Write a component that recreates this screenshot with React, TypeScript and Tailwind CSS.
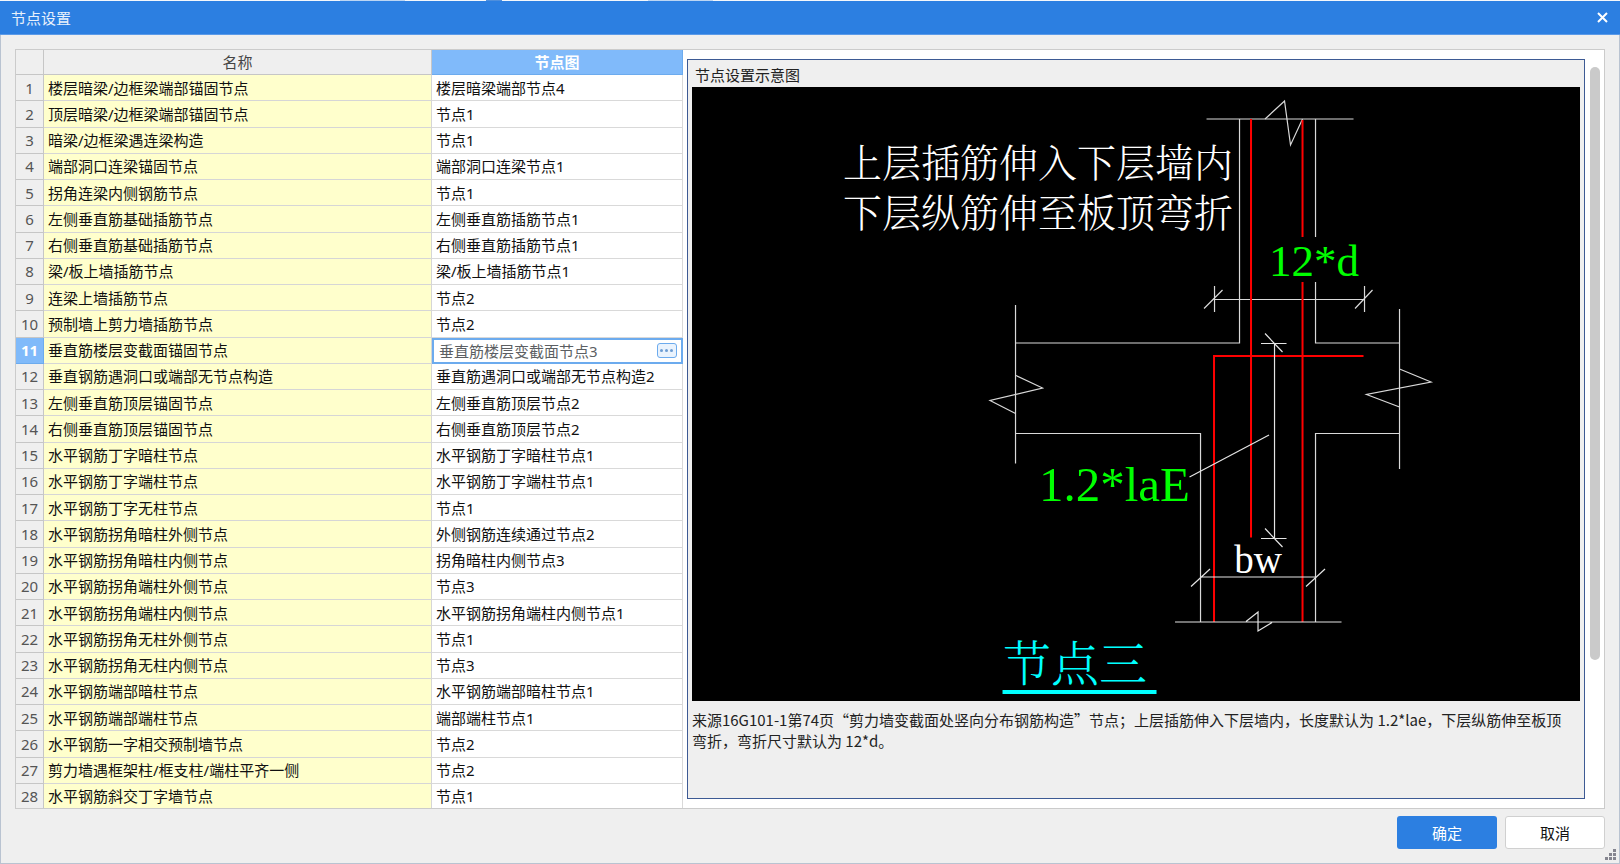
import React from "react";

const SANS = 'font-["Noto_Sans","Noto_Sans_CJK_SC",sans-serif]';

type Row = { name: string; node: string };

const rows: Row[] = [
  { name: "楼层暗梁/边框梁端部锚固节点", node: "楼层暗梁端部节点4" },
  { name: "顶层暗梁/边框梁端部锚固节点", node: "节点1" },
  { name: "暗梁/边框梁遇连梁构造", node: "节点1" },
  { name: "端部洞口连梁锚固节点", node: "端部洞口连梁节点1" },
  { name: "拐角连梁内侧钢筋节点", node: "节点1" },
  { name: "左侧垂直筋基础插筋节点", node: "左侧垂直筋插筋节点1" },
  { name: "右侧垂直筋基础插筋节点", node: "右侧垂直筋插筋节点1" },
  { name: "梁/板上墙插筋节点", node: "梁/板上墙插筋节点1" },
  { name: "连梁上墙插筋节点", node: "节点2" },
  { name: "预制墙上剪力墙插筋节点", node: "节点2" },
  { name: "垂直筋楼层变截面锚固节点", node: "垂直筋楼层变截面节点3" },
  { name: "垂直钢筋遇洞口或端部无节点构造", node: "垂直筋遇洞口或端部无节点构造2" },
  { name: "左侧垂直筋顶层锚固节点", node: "左侧垂直筋顶层节点2" },
  { name: "右侧垂直筋顶层锚固节点", node: "右侧垂直筋顶层节点2" },
  { name: "水平钢筋丁字暗柱节点", node: "水平钢筋丁字暗柱节点1" },
  { name: "水平钢筋丁字端柱节点", node: "水平钢筋丁字端柱节点1" },
  { name: "水平钢筋丁字无柱节点", node: "节点1" },
  { name: "水平钢筋拐角暗柱外侧节点", node: "外侧钢筋连续通过节点2" },
  { name: "水平钢筋拐角暗柱内侧节点", node: "拐角暗柱内侧节点3" },
  { name: "水平钢筋拐角端柱外侧节点", node: "节点3" },
  { name: "水平钢筋拐角端柱内侧节点", node: "水平钢筋拐角端柱内侧节点1" },
  { name: "水平钢筋拐角无柱外侧节点", node: "节点1" },
  { name: "水平钢筋拐角无柱内侧节点", node: "节点3" },
  { name: "水平钢筋端部暗柱节点", node: "水平钢筋端部暗柱节点1" },
  { name: "水平钢筋端部端柱节点", node: "端部端柱节点1" },
  { name: "水平钢筋一字相交预制墙节点", node: "节点2" },
  { name: "剪力墙遇框架柱/框支柱/端柱平齐一侧", node: "节点2" },
  { name: "水平钢筋斜交丁字墙节点", node: "节点1" },
];

const SELECTED = 10;

function TitleBar() {
  return (
    <header className="flex h-[34px] shrink-0 items-center justify-between border-b border-[#5b9ae8] bg-[#2c7fe1] pl-[11px] pr-3">
      <h1 className="text-[15px] leading-5 text-[#e8f1fc]">节点设置</h1>
      <button type="button" aria-label="关闭" className="flex size-[11px] items-center justify-center">
        <svg viewBox="0 0 11 11" className="size-[11px]" stroke="#fff" strokeWidth="2" fill="none">
          <path d="M1 1 L10 10 M10 1 L1 10" />
        </svg>
      </button>
    </header>
  );
}

function NodeEditor({ value }: { value: string }) {
  return (
    <div className="flex h-full items-center border-2 border-[#6cabee] bg-white pl-[5px] pr-1">
      <input
        aria-label="节点图"
        defaultValue={value}
        className="h-5 min-w-0 flex-1 bg-transparent p-0 text-[15px] leading-5 text-[#5c5f63] outline-none"
      />
      <button
        type="button"
        aria-label="选择节点图"
        className="flex h-[15px] w-5 items-center justify-center gap-[2px] rounded-[3px] border border-[#6cabee] bg-[#eaf3fd]"
      >
        <span className="size-[3px] rounded-full bg-[#6d9dd3]" />
        <span className="size-[3px] rounded-full bg-[#6d9dd3]" />
        <span className="size-[3px] rounded-full bg-[#6d9dd3]" />
      </button>
    </div>
  );
}

function NodeTable() {
  return (
    <div className="w-[42%] shrink-0 overflow-hidden">
      <table className="h-[calc(100%+2px)] w-full table-fixed border-separate border-spacing-0 text-left text-[15px] leading-5">
        <colgroup>
          <col className="w-7" />
          <col />
          <col className="w-[251px]" />
        </colgroup>
        <thead>
          <tr className="h-[25px]">
            <td className="border-b border-r border-[#c6c6c6] bg-[#efefef] p-0" />
            <th scope="col" className="border-b border-r border-[#c6c6c6] bg-[#efefef] p-0 text-center font-normal text-[#444]">
              名称
            </th>
            <th scope="col" className="border-b border-r border-[#6cabee] bg-[#80bafa] p-0 text-center font-bold text-white">
              节点图
            </th>
          </tr>
        </thead>
        <tbody>
          {rows.map((row, i) => (
            <tr key={i} className="h-[26px]">
              <th
                scope="row"
                className={
                  i === SELECTED
                    ? "border-b border-r border-[#6cabee] bg-[#80bafa] p-0 text-center font-bold text-white"
                    : "border-b border-r border-[#c6c6c6] bg-[#efefef] p-0 text-center font-normal text-[#555]"
                }
              >
                {i + 1}
              </th>
              <td className="border-b border-r border-[#d6d6d6] bg-[#ffffcc] py-0 pl-1 pr-0 text-[#111]">{row.name}</td>
              {i === SELECTED ? (
                <td className="h-[26px] p-0">
                  <NodeEditor value={row.node} />
                </td>
              ) : (
                <td className="border-b border-r border-[#d9d9d9] bg-white py-0 pl-1 pr-0 text-[#111]">{row.node}</td>
              )}
            </tr>
          ))}
        </tbody>
      </table>
    </div>
  );
}

function Diagram() {
  return (
    <svg viewBox="692 87 888 614" className="min-h-0 w-full flex-1 bg-black" role="img" aria-label="节点三">
      <g fill="none" stroke="#d9d9d9" strokeWidth="1.2">
        <path d="M1206.5 119H1353.5 M1239.5 119V343H1015.5 M1315.5 119V237 M1315.5 282V343H1399.5" />
        <path d="M1265 119L1284.5 101L1290.5 145L1302.5 119" />
        <path d="M1214.5 299.5H1364.5 M1214.5 286V312 M1364.5 286V312 M1204 308.5L1222.5 290 M1355 308.5L1372.5 290" />
        <path d="M1015.5 305V463.5 M1399.5 309V469" />
        <path d="M1015.5 433.5H1200.5V622 M1399.5 433.5H1315.5V622" />
        <path d="M1016 375.5L1042.5 388L990 400.5L1015.5 413.5" />
        <path d="M1399.5 369L1431 382L1366.5 394.5L1399.5 407" />
      </g>
      <g fill="none" stroke="#ff0000" strokeWidth="2">
        <path d="M1251 119V537.5 M1302.5 120V237 M1302.5 282V622" />
        <path d="M1214 622V356H1363.5" />
      </g>
      <g fill="none" stroke="#e4e4e4" strokeWidth="1.2">
        <path d="M1274.5 343V538 M1261 343.5H1286.5 M1261 538.5H1286.5 M1265 333.5L1282.5 352 M1265 528.5L1282.5 547" />
        <path d="M1189.5 477L1269 435" />
        <path d="M1200.5 577H1315.5 M1191 586.5L1210 569 M1306 586.5L1325 569" />
        <path d="M1175 622H1341.5 M1246 621.5L1258 612V631L1272 622.5" />
      </g>
      <g className='font-["Noto_Serif_CJK_SC","Noto_Sans_CJK_SC",sans-serif] font-light' fill="#fff">
        <text x="843" y="177" fontSize="39">上层插筋伸入下层墙内</text>
        <text x="843" y="227" fontSize="39">下层纵筋伸至板顶弯折</text>
        <text x="1003" y="681" fontSize="48" fill="#00ffff">节点三</text>
      </g>
      <g className='font-["Liberation_Serif",serif]'>
        <text x="1269" y="276" fontSize="45" fill="#00ff00">12*d</text>
        <text x="1190" y="501" fontSize="49" fill="#00ff00" textAnchor="end">1.2*laE</text>
        <text x="1258" y="573" fontSize="39" fill="#fff" textAnchor="middle">bw</text>
      </g>
      <path d="M1002.5 692H1156.5" stroke="#00ffff" strokeWidth="4" />
    </svg>
  );
}

function PreviewPanel() {
  return (
    <section className="mb-[9px] ml-1 mt-[9px] flex min-w-0 flex-1 flex-col border border-[#3d5a94] bg-[#efefef] px-1">
      <h2 className="pb-[2px] pl-[3px] pt-[6px] text-[15px] leading-[19px] text-[#222]">节点设置示意图</h2>
      <Diagram />
      <p className='h-[97px] shrink-0 pr-2 pt-2 font-["Noto_Sans_CJK_SC",sans-serif] text-[15px] leading-[21px] text-[#222]'>
        来源16G101-1第74页“剪力墙变截面处竖向分布钢筋构造”节点；上层插筋伸入下层墙内，长度默认为 1.2*lae，下层纵筋伸至板顶弯折，弯折尺寸默认为 12*d。
      </p>
    </section>
  );
}

export default function App() {
  return (
    <div lang="zh-CN" className={`relative flex h-screen min-h-[864px] flex-col bg-[#efefef] ${SANS}`}>
      <div className="flex h-px shrink-0 bg-[#f4f7fb]">
        <span className="ml-[21%] w-[4%] bg-[#bcd5f3]" />
        <span className="ml-[5%] w-[1%] bg-[#4f8fdc]" />
        <span className="ml-[9%] w-[4%] bg-[#bcd5f3]" />
      </div>
      <TitleBar />
      <main className="flex min-h-0 flex-1 flex-col border-x border-b border-[#b9c3d1] px-[14px] pb-[14px] pt-[14px]">
        <div className="flex min-h-0 flex-1 border border-[#cbcbcb] bg-white">
          <NodeTable />
          <PreviewPanel />
          <div className="ml-[5px] mr-1 w-[10px] pt-[17px]">
            <div className="h-4/5 rounded-full bg-[#cacaca]" />
          </div>
        </div>
        <footer className="mt-[7px] flex justify-end gap-2">
          <button type="button" className="h-[33px] w-[100px] rounded-[3px] bg-[#2c7fe1] text-[15px] leading-5 text-white">
            确定
          </button>
          <button
            type="button"
            className="h-[33px] w-[100px] rounded-[3px] border border-[#d0d0d0] bg-white text-[15px] leading-5 text-[#111]"
          >
            取消
          </button>
        </footer>
      </main>
      <svg viewBox="0 0 11 11" className="absolute bottom-1 right-1 size-[11px]" fill="#85858f">
        <path d="M8 0h3v3h-3z M4 4h3v3h-3z M8 4h3v3h-3z M0 8h3v3h-3z M4 8h3v3h-3z M8 8h3v3h-3z" />
      </svg>
    </div>
  );
}
